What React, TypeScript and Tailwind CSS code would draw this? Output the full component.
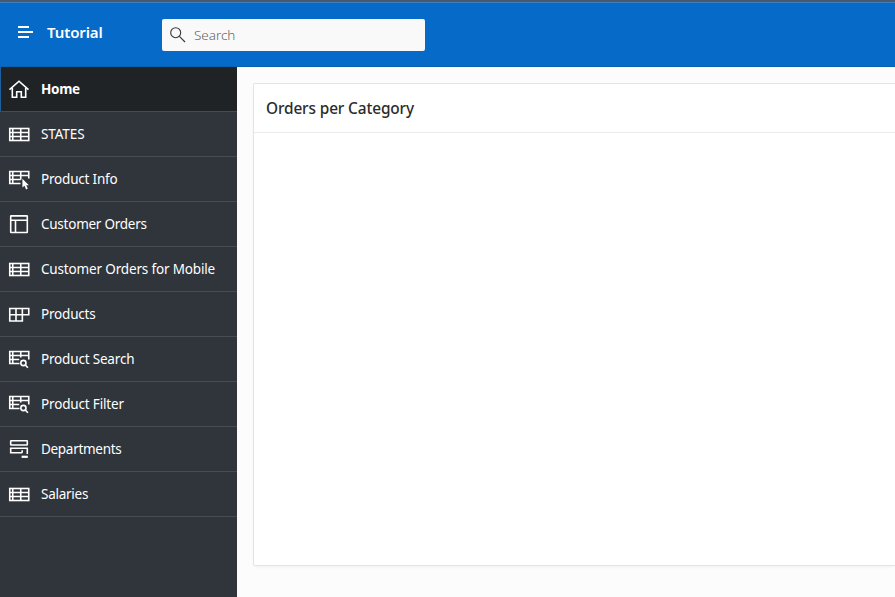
import type { ReactNode } from 'react';

const HomeIcon = () => (
  <>
    <path d="M1.5 12.6 11 4.2l9.5 8.4" />
    <path d="M4.3 11v9.2h4.4v-5.4h4.6v5.4h4.4V11" />
  </>
);

const TableIcon = () => (
  <>
    <rect x="1.75" y="6.5" width="19" height="12" />
    <path d="M4.75 6.5v12M12.75 6.5v12M1.75 10.5h19M1.75 14.5h19" />
  </>
);

const TablePointerIcon = () => (
  <>
    <path d="M12.5 16.5H1.75v-12h19v7M4.75 4.5v12M12.75 4.5v8M1.75 8.5h19M1.75 12.5h11" />
    <path d="M14.4 11.8v8.8l2.1-1.8 1.6 3.6 1.7-.8-1.6-3.4h2.7z" fill="currentColor" stroke="none" />
  </>
);

const LayoutIcon = () => (
  <>
    <rect x="2.7" y="3.9" width="16.6" height="16.6" rx="0.5" />
    <path d="M2.7 8.2h16.6M7.5 8.2v12.3" />
  </>
);

const CellsIcon = () => (
  <path d="M1.75 6.5h19v6.2h-19zM1.75 12.7v6.3h12.6v-12.5M8 6.5v12.5" />
);

const TableSearchIcon = () => (
  <>
    <path d="M11.5 16.5H1.75v-12h19v8M4.75 4.5v12M12.75 4.5v6M1.75 8.5h19M1.75 12.5h9.5" />
    <circle cx="15.4" cy="16" r="2.6" />
    <path d="m17.3 18 2.6 2.8" />
  </>
);

const FormIcon = () => (
  <>
    <rect x="2.7" y="3.7" width="16.6" height="4.3" rx="0.4" />
    <path d="M14.2 15.7H2.7v-4.4h16.6v5.8M14.2 13.2v2.5" />
    <path d="M13.6 19.8h6.2" strokeWidth="2.2" />
  </>
);

type Item = { label: string; icon: ReactNode; tracking: string };

const items: Item[] = [
  { label: 'Home', icon: <HomeIcon />, tracking: 'tracking-[-0.3px]' },
  { label: 'STATES', icon: <TableIcon />, tracking: 'tracking-[-0.1px]' },
  { label: 'Product Info', icon: <TablePointerIcon />, tracking: 'tracking-[-0.2px]' },
  { label: 'Customer Orders', icon: <LayoutIcon />, tracking: 'tracking-[-0.25px]' },
  { label: 'Customer Orders for Mobile', icon: <TableIcon />, tracking: 'tracking-[-0.16px]' },
  { label: 'Products', icon: <CellsIcon />, tracking: 'tracking-[-0.2px]' },
  { label: 'Product Search', icon: <TableSearchIcon />, tracking: 'tracking-[-0.18px]' },
  { label: 'Product Filter', icon: <TableSearchIcon />, tracking: 'tracking-[-0.16px]' },
  { label: 'Departments', icon: <FormIcon />, tracking: 'tracking-[-0.3px]' },
  { label: 'Salaries', icon: <TableIcon />, tracking: 'tracking-[-0.25px]' },
];

export default function App() {
  return (
    <div className="flex h-[597px] w-full flex-col overflow-hidden bg-[#fcfcfc] font-['Noto_Sans',sans-serif]">
      <header className="flex h-[67px] shrink-0 items-start border-t-2 border-[#465a6c] bg-[#056ac8] shadow-[inset_0_1px_0_#3d7fc0,inset_0_-1px_0_#0a5fae]">
        <div className="flex w-[162px] items-center pt-[18px] pl-[18px]">
          <svg width="16" height="14" viewBox="0 0 16 14" fill="none" stroke="white" strokeWidth="2" className="mb-px">
            <path d="M0 2h11M0 7h15M0 12h11" />
          </svg>
          <span className="ml-[13px] text-[15px] leading-6 font-semibold tracking-[-0.1px] text-white">Tutorial</span>
        </div>
        <div className="mt-[17px] flex h-8 w-[263px] items-center rounded-[2px] bg-[#f9f9f9] pl-2">
          <svg width="16" height="16" viewBox="0 0 16 16" fill="none" stroke="#35353d" strokeWidth="1.1" className="mb-px">
            <circle cx="5.7" cy="5.7" r="5" />
            <path d="m9.4 9.4 5.6 5.6" />
          </svg>
          <span className="mt-px ml-[8px] text-[13.5px] font-light tracking-[-0.05px] text-[#666]">Search</span>
        </div>
      </header>
      <div className="flex min-h-0 flex-1">
        <nav className="w-[237px] shrink-0 bg-[#30343b]">
          {items.map((item, i) => (
            <a
              key={item.label}
              className={`flex h-[45px] items-center border-b border-[#474b52] text-white ${
                i === 0 ? 'border-l border-l-[#1d5f9f] bg-[#1f2326] pl-[7px] font-bold' : 'pl-2'
              }`}
            >
              <svg width="24" height="24" viewBox="0 0 24 24" fill="none" stroke="currentColor" strokeWidth="1.6" className="shrink-0">
                {item.icon}
              </svg>
              <span className={`ml-[9px] text-[13.5px] leading-5 whitespace-nowrap ${item.tracking}`}>{item.label}</span>
            </a>
          ))}
        </nav>
        <main className="min-w-0 flex-1 pt-4 pl-4">
          <section className="h-[483px] rounded-l-[2px] border border-r-0 border-[#e4e4e4] bg-white shadow-[0_2px_4px_-2px_rgba(0,0,0,0.08)]">
            <h2 className="flex h-[49px] items-center border-b border-[#ebebeb] pt-0.5 pl-3 text-[15.4px] font-medium tracking-[-0.13px] text-[#2b2b2b]">
              Orders per Category
            </h2>
          </section>
        </main>
      </div>
    </div>
  );
}
